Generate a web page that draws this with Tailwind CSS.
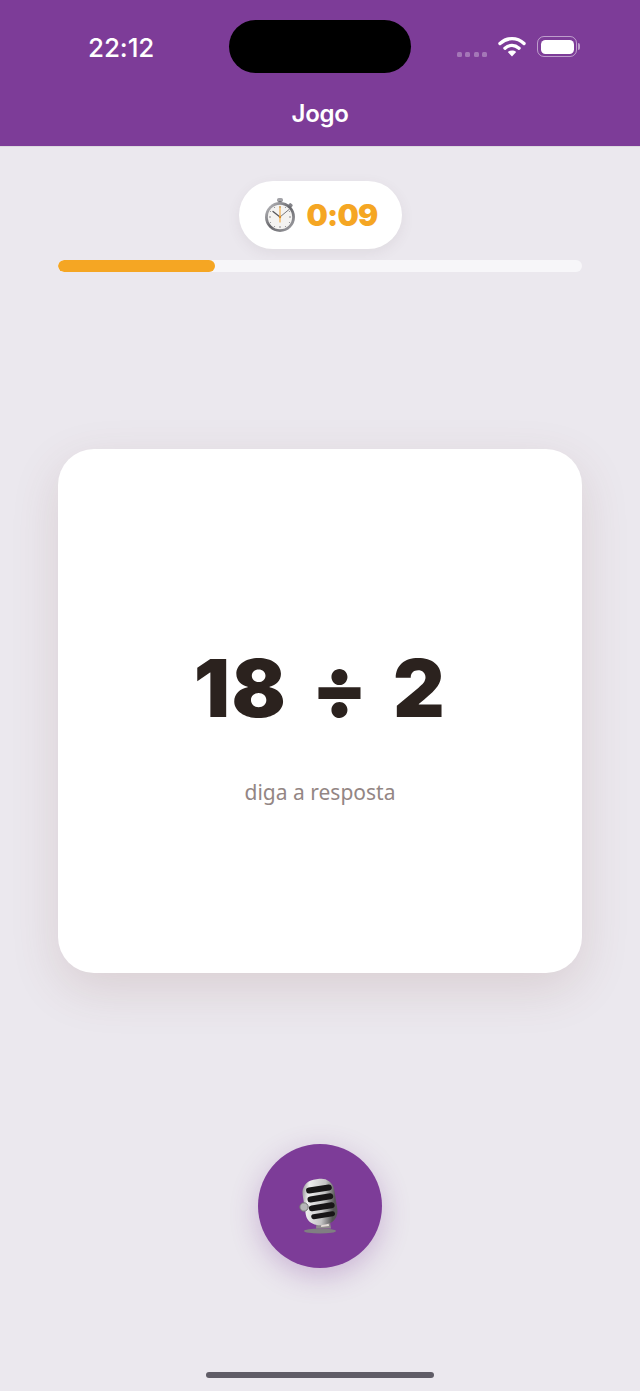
<!DOCTYPE html>
<html lang="pt">
<head>
<meta charset="utf-8">
<script src="https://cdn.jsdelivr.net/npm/@tailwindcss/browser@4"></script>
<title>Jogo</title>
</head>
<body class="m-0">
<div class="relative w-[640px] h-[1391px] overflow-hidden bg-[#ebe8ee] font-['Inter',sans-serif]">
  <header class="relative h-[147px] bg-[#7d3c98] border-b border-[#dcdadf]">
    <div class="flex justify-between h-[95px]">
      <span class="ml-[88px] mt-[33px] h-[30px] text-[26px] leading-[30px] font-medium text-white tracking-[-0.1px]">22:12</span>
      <div class="mr-[60px] mt-[36px] flex items-start h-[24px]">
        <div class="mt-[16px] flex gap-[3.5px] mr-[11px] opacity-30">
          <i class="block w-[5px] h-[5px] rounded-[1.5px] bg-white"></i><i class="block w-[5px] h-[5px] rounded-[1.5px] bg-white"></i><i class="block w-[5px] h-[5px] rounded-[1.5px] bg-white"></i><i class="block w-[5px] h-[5px] rounded-[1.5px] bg-white"></i>
        </div>
        <svg class="block mr-[11px]" width="28" height="21" viewBox="0 0 28 21" fill="none">
          <path d="M2 7.5C9 1 19 1 26 7.5" stroke="#fff" stroke-width="3.4" stroke-linecap="round"/>
          <path d="M7 12.2C11.2 8.6 16.8 8.6 21 12.2" stroke="#fff" stroke-width="3.4" stroke-linecap="round"/>
          <path d="M14 20.5L9.8 16C12.2 14.1 15.8 14.1 18.2 16Z" fill="#fff"/>
        </svg>
        <div class="flex items-center">
          <div class="w-[40px] h-[21px] rounded-[7px] border border-white/50 p-[2.5px]"><div class="w-full h-full rounded-[4.5px] bg-white"></div></div>
          <div class="ml-[1px] w-[2px] h-[7px] rounded-r-[2px] bg-white/50"></div>
        </div>
      </div>
    </div>
    <div class="absolute left-[229px] top-[20px] w-[182px] h-[53px] rounded-[27px] bg-black"></div>
    <h1 class="text-center text-[24px] leading-[28px] font-semibold text-white tracking-[-0.3px] mt-[5px]">Jogo</h1>
  </header>

  <main class="flex flex-col items-center">
    <div class="mt-[34px] w-[163px] h-[68px] rounded-[34px] bg-white shadow-[0_4px_14px_rgba(90,70,80,0.08)] flex items-center justify-center gap-[10px]">
      <svg width="34" height="36" viewBox="0 0 34 36">
        <defs>
          <linearGradient id="steel" x1="0" y1="0" x2="1" y2="1"><stop offset="0" stop-color="#c9c9cc"/><stop offset="0.5" stop-color="#66666b"/><stop offset="1" stop-color="#a9a9ad"/></linearGradient>
        </defs>
        <rect x="14" y="1" width="6" height="4" rx="1.8" fill="#a3a3a8"/>
        <rect x="15.5" y="4" width="3" height="3" fill="#77777c"/>
        <g transform="rotate(42 17 20)"><rect x="15" y="2.5" width="4" height="4" rx="1.2" fill="#85858a"/></g>
        <circle cx="17" cy="20" r="15" fill="url(#steel)"/>
        <circle cx="17" cy="20" r="12.2" fill="#f4f3f1"/>
        <g fill="#8d8d92">
          <rect x="16.5" y="9" width="1" height="2"/><rect x="16.5" y="29" width="1" height="2"/><rect x="6" y="19.5" width="2" height="1"/><rect x="26" y="19.5" width="2" height="1"/>
          <circle cx="22.5" cy="10.5" r=".6"/><circle cx="26.5" cy="14.5" r=".6"/><circle cx="26.5" cy="25.5" r=".6"/><circle cx="22.5" cy="29.5" r=".6"/><circle cx="11.5" cy="29.5" r=".6"/><circle cx="7.5" cy="25.5" r=".6"/><circle cx="7.5" cy="14.5" r=".6"/><circle cx="11.5" cy="10.5" r=".6"/>
        </g>
        <path d="M17 20L10 14.5" stroke="#55555a" stroke-width="1.3" stroke-linecap="round"/>
        <path d="M17 20L26 12.5" stroke="#77777c" stroke-width="1" stroke-linecap="round"/>
        <path d="M17 25V9.5" stroke="#f0a63a" stroke-width="1.1" stroke-linecap="round"/>
        <circle cx="17" cy="20" r="1.2" fill="#d98f2b"/>
      </svg>
      <span class="text-[30px] leading-[36px] font-black text-[#f5a623] tracking-[-0.8px]">0:09</span>
    </div>

    <div class="mt-[11px] w-[524px] h-[12px] rounded-full bg-[#f7f6f9] overflow-hidden">
      <div class="h-full rounded-full bg-[#f5a623]" style="width:30%"></div>
    </div>

    <section class="mt-[177px] w-[524px] h-[524px] rounded-[36px] bg-white shadow-[0_16px_48px_rgba(120,70,60,0.15)] flex flex-col items-center pt-[193px]">
      <div class="text-[80px] leading-[92px] font-black text-[#2b221e] tracking-[1.5px] [word-spacing:7px] whitespace-pre">18 ÷ 2</div>
      <p class="mt-[43px] text-[21px] leading-[30px] text-[#938684] font-['Noto_Sans',sans-serif]">diga a resposta</p>
    </section>

    <button class="mt-[171px] w-[124px] h-[124px] rounded-full bg-[#7d3c98] shadow-[0_8px_28px_rgba(125,60,152,0.3)] flex items-center justify-center">
      <svg width="46" height="60" viewBox="0 0 46 60">
        <defs>
          <linearGradient id="chrome" x1="0" y1="0" x2="1" y2="0.4"><stop offset="0" stop-color="#737375"/><stop offset="0.25" stop-color="#eeeeee"/><stop offset="0.7" stop-color="#c4c4c4"/><stop offset="1" stop-color="#555556"/></linearGradient>
        </defs>
        <ellipse cx="23" cy="55" rx="16" ry="2.6" fill="#807f82"/>
        <path d="M20 40H32L34 52.5H19Z" fill="#8f8c8c"/>
        <path d="M25 44L31 43L32 50L24 51Z" fill="#e4dcd8"/>
        <g transform="rotate(-9 23 26)">
          <rect x="7" y="3" width="32" height="46" rx="13" fill="url(#chrome)"/>
          <rect x="11" y="10" width="26" height="6" rx="3" fill="#171516"/>
          <rect x="11" y="19" width="26" height="6" rx="3" fill="#171516"/>
          <rect x="11" y="28" width="26" height="6" rx="3" fill="#171516"/>
          <rect x="12" y="37" width="24" height="5" rx="2.5" fill="#171516"/>
        </g>
        <circle cx="7" cy="31" r="4.2" fill="#b5b5b7" stroke="#747476"/>
      </svg>
    </button>
  </main>

  <div class="absolute left-[206px] bottom-[13px] w-[228px] h-[6px] rounded-full bg-[#5f5c66]"></div>
</div>
</body>
</html>
